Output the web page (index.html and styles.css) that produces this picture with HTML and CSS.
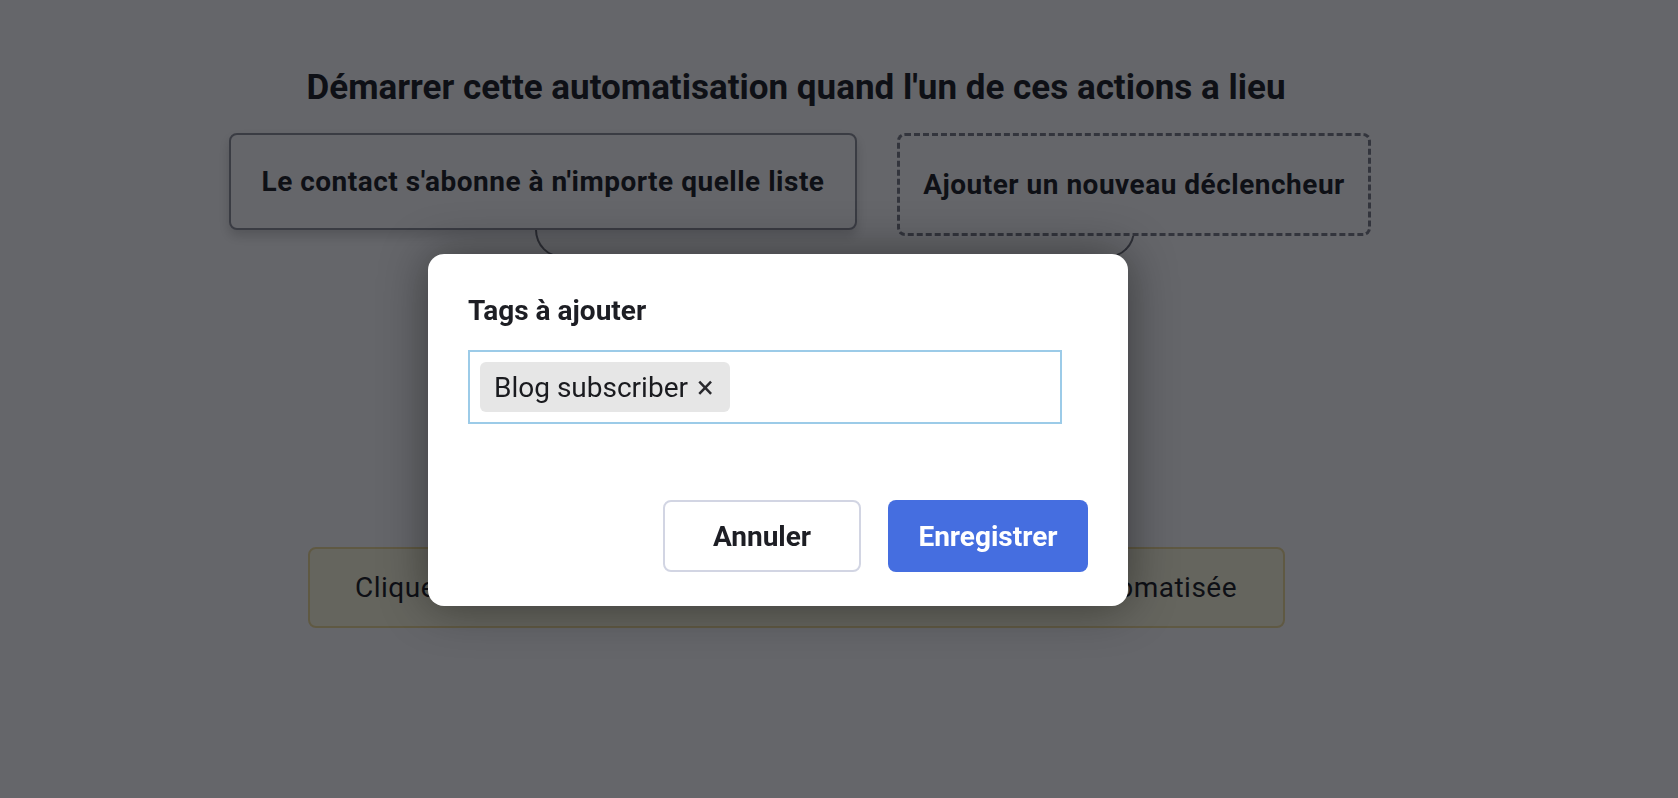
FILE: index.html
```html
<!DOCTYPE html>
<html lang="fr">
<head>
  <meta charset="UTF-8">
  <meta name="viewport" content="width=device-width, initial-scale=1.0">
  <title>Automatisation</title>
  <link rel="stylesheet" href="styles.css">
</head>
<body>
  <main class="canvas">
    <h2 class="canvas-title">Démarrer cette automatisation quand l'un de ces actions a lieu</h2>

    <div class="triggers">
      <div class="connector"></div>
      <div class="trigger">Le contact s'abonne à n'importe quelle liste</div>
      <div class="trigger trigger-add">Ajouter un nouveau déclencheur</div>
    </div>

    <div class="hint">Cliquez ici pour ajouter une action dans votre séquence automatisée</div>
  </main>

  <div class="overlay">
    <div class="modal">
      <label class="modal-label" for="tags">Tags à ajouter</label>
      <div class="tag-input" id="tags">
        <span class="tag">Blog subscriber <span class="tag-remove">×</span></span>
      </div>
      <div class="modal-actions">
        <button class="btn btn-cancel">Annuler</button>
        <button class="btn btn-save">Enregistrer</button>
      </div>
    </div>
  </div>
</body>
</html>
```

FILE: styles.css
```css
body {
  margin: 0;
  font-family: Roboto, "Noto Sans", sans-serif;
  background-color: #ffffff;
  color: #1c1d24;
}
.canvas {
  width: 1592px;
  padding-top: 67px;
  display: flex;
  flex-direction: column;
  align-items: center;
}
.canvas-title {
  margin: 0 0 24px;
  font-size: 35px;
  line-height: 42px;
  font-weight: 700;
}
.triggers {
  position: relative;
  display: flex;
  align-items: flex-start;
  gap: 40px;
  margin-left: 8px;
}
.trigger {
  position: relative;
  z-index: 1;
  box-sizing: border-box;
  width: 628px;
  padding: 30px 0;
  text-align: center;
  font-size: 28px;
  line-height: 33px;
  font-weight: 700;
  letter-spacing: 0.5px;
  background: #ffffff;
  border: 2px solid #8e9099;
  border-radius: 8px;
  box-shadow: 0 6px 12px rgba(0, 0, 0, 0.18);
}
.trigger-add {
  width: 474px;
  padding: 32px 0;
  border: 3px dashed #7c7e88;
  box-shadow: none;
}
/* bracket joining both triggers */
.connector {
  position: absolute;
  left: 306px;
  top: 95px;
  width: 600px;
  height: 30px;
  box-sizing: border-box;
  border: 2px solid #6f7078;
  border-top: none;
  border-radius: 0 0 28px 28px;
}
.hint {
  box-sizing: border-box;
  width: 977px;
  margin-top: 311px;
  padding: 22px 0;
  text-align: center;
  font-size: 28px;
  line-height: 33px;
  letter-spacing: 0.5px;
  background: #fffbe0;
  border: 2px solid #f0dc98;
  border-radius: 8px;
}
.overlay {
  position: fixed;
  inset: 0;
  z-index: 10;
  display: flex;
  justify-content: center;
  align-items: flex-start;
  padding: 254px 122px 0 0;
  background: rgba(6, 8, 14, 0.62);
}
.modal {
  box-sizing: border-box;
  width: 700px;
  padding: 40px 40px 34px;
  background: #ffffff;
  border-radius: 16px;
  box-shadow: 0 0 48px rgba(0, 0, 0, 0.45);
  color: #1d1e24;
}
.modal-label {
  display: block;
  margin-bottom: 22px;
  font-size: 28px;
  line-height: 34px;
  font-weight: 700;
}
.tag-input {
  box-sizing: border-box;
  width: 594px;
  padding: 10px;
  display: flex;
  border: 2px solid #9ccbe8;
}
.tag {
  display: inline-flex;
  align-items: center;
  gap: 9px;
  height: 50px;
  padding: 0 16px 0 14px;
  font-size: 28px;
  background: #e6e6e6;
  border-radius: 6px;
  color: #1a1b1f;
}
.tag-remove {
  font-size: 31px;
  color: #2a2a2e;
}
.modal-actions {
  display: flex;
  justify-content: flex-end;
  gap: 27px;
  margin-top: 76px;
}
.btn {
  height: 72px;
  font-family: inherit;
  font-size: 28px;
  font-weight: 700;
  border-radius: 8px;
  cursor: pointer;
}
.btn-cancel {
  width: 198px;
  background: #ffffff;
  color: #1d1e24;
  border: 2px solid #d2d5e3;
}
.btn-save {
  width: 200px;
  background: #456ee0;
  color: #ffffff;
  border: none;
}
```
